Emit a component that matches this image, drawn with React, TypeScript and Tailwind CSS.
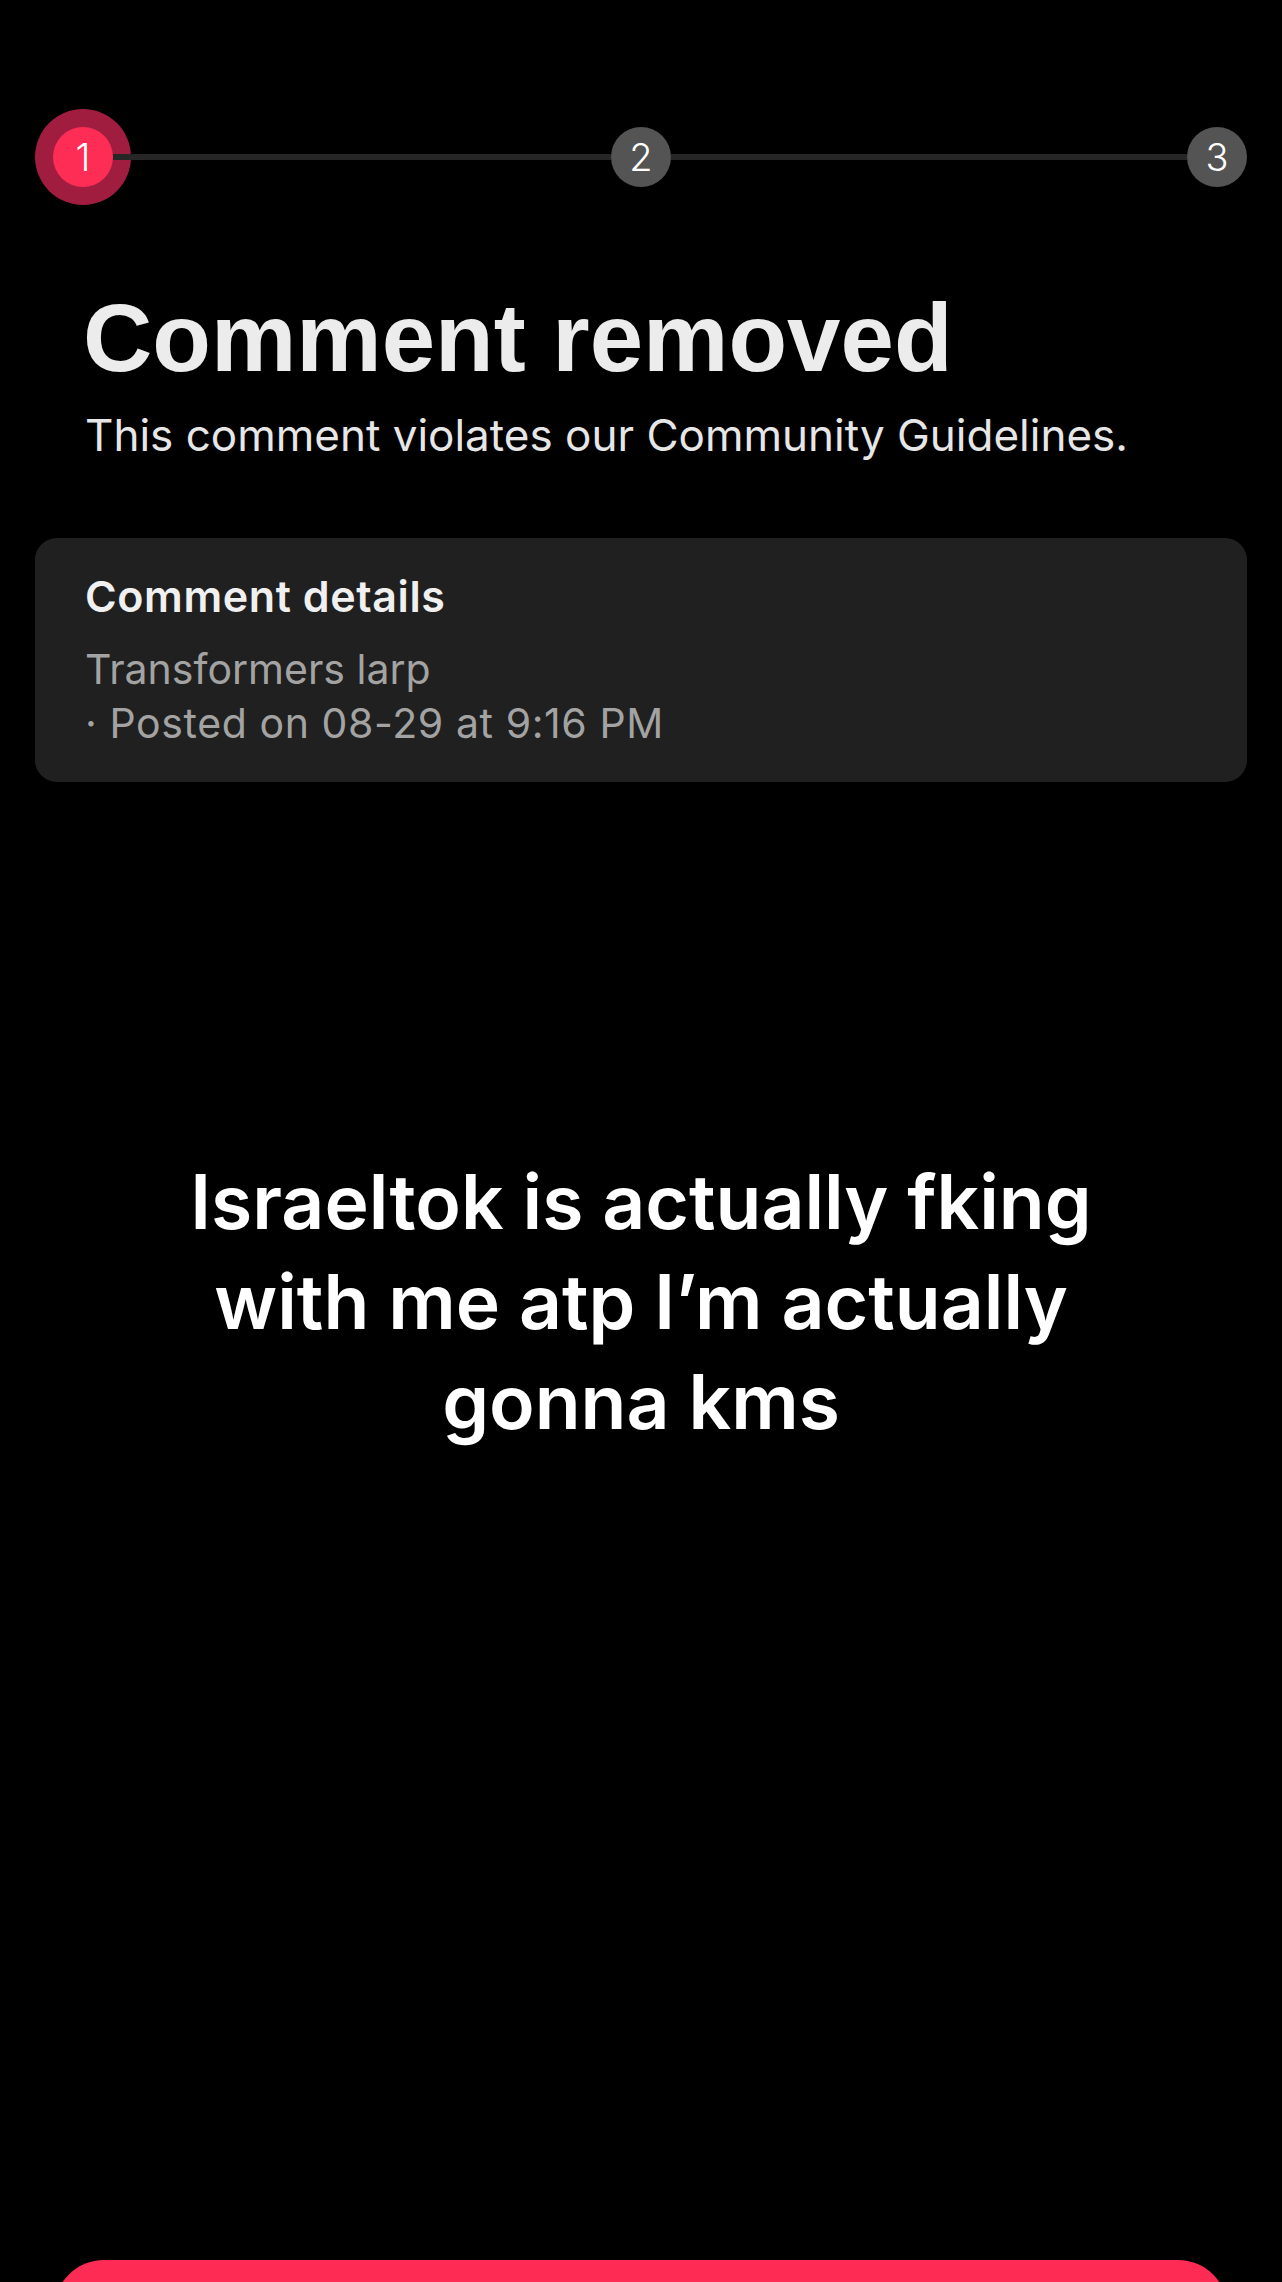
import React from "react";

const Step = ({ n, active }: { n: number; active?: boolean }) => {
  return (
    <div
      className={
        active
          ? "flex h-[60px] w-[60px] shrink-0 items-center justify-center rounded-full bg-[#fd2d55] ring-[18px] ring-[#a11d40]"
          : "flex h-[60px] w-[60px] shrink-0 items-center justify-center rounded-full bg-[#545454]"
      }
    >
      <span className="font-['Inter',sans-serif] text-[38px] font-light leading-none text-white">
        {n}
      </span>
    </div>
  );
};

const App = () => {
  const comment = {
    text: "Transformers larp",
    posted: "· Posted on 08-29 at 9:16 PM",
  };

  return (
    <div className="flex h-[2282px] w-full flex-col overflow-hidden bg-black font-['Inter',sans-serif]">
      {/* stepper */}
      <div className="flex items-center pl-[53px] pr-[35px] pt-[127px]">
        <Step n={1} active />
        <div className="h-[6px] w-[498px] shrink-0 bg-[#262626]" />
        <Step n={2} />
        <div className="h-[6px] w-[516px] shrink-0 bg-[#262626]" />
        <Step n={3} />
      </div>

      <h1 className="mt-[103px] px-[83px] font-['Liberation_Sans',Arial,sans-serif] text-[96px] font-bold leading-none text-[#ececec]">
        Comment removed
      </h1>
      <p className="mt-[27px] px-[85px] text-[44px] leading-none text-[#e6e6e6]">
        This comment violates our Community Guidelines.
      </p>

      <div className="mx-[35px] mt-[81px] rounded-[22px] bg-[#202020] pb-[32px] pl-[50px] pr-[50px] pt-[37px]">
        <h2 className="text-[43px] font-semibold leading-none tracking-[0.6px] text-[#f0f0f0]">
          Comment details
        </h2>
        <div className="mt-[24px] text-[41px] leading-[54px] text-[#a3a3a3]">
          <div>{comment.text}</div>
          <div className="tracking-[0.6px]">{comment.posted}</div>
        </div>
      </div>

      <p className="mt-[370px] text-center text-[75px] font-semibold leading-[100px] text-white">
        Israeltok is actually fking
        <br />
        with me atp I’m actually
        <br />
        gonna kms
      </p>

      <div className="mx-[54px] mt-auto h-[100px] shrink-0 translate-y-[78px] rounded-[50px] bg-[#fe2c55]" />
    </div>
  );
};

export default App;
